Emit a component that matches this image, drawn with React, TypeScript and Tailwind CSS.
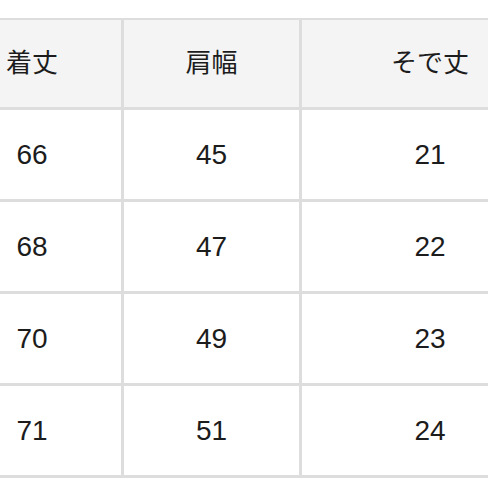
import React from "react";

const header = ["着丈", "肩幅", "そで丈"];
const rows = [
  ["66", "45", "21"],
  ["68", "47", "22"],
  ["70", "49", "23"],
  ["71", "51", "24"],
];

export default function App() {
  return (
    <div
      className="w-[488px] h-[488px] overflow-hidden bg-white"
      style={{ fontFamily: '"Liberation Sans", "Noto Sans CJK JP", sans-serif' }}
    >
      <div className="mt-[18px] -ml-[57px] w-[615px] grid grid-cols-[178px_175px_256px] grid-rows-[87px_89px_89px_89px_89px] gap-[3px] bg-[#dddddd] pt-[2px] pb-[3px]">
        {header.map((h) => (
          <div key={h} className="bg-[#f4f4f4] flex items-center justify-center text-[26px] text-[#1c1c1c]">
            {h}
          </div>
        ))}
        {rows.map((r, i) =>
          r.map((c, j) => (
            <div key={`${i}-${j}`} className="bg-white flex items-center justify-center text-[28px] text-[#1c1c1c]">
              {c}
            </div>
          ))
        )}
      </div>
    </div>
  );
}
